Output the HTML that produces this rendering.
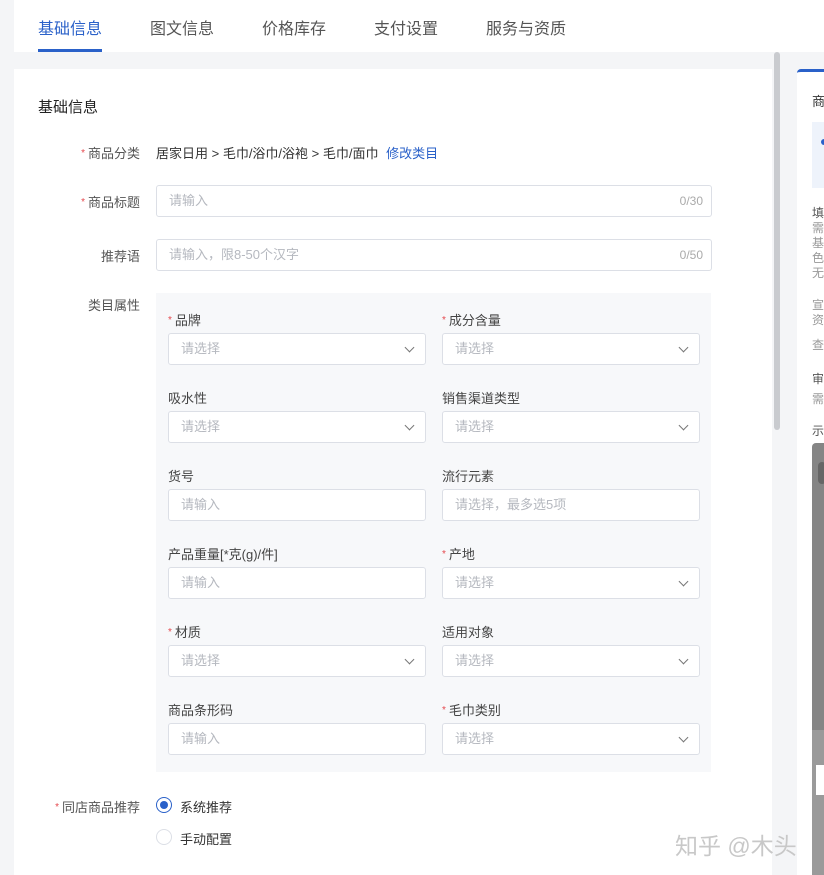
<!DOCTYPE html>
<html><head><meta charset="utf-8"><style>
*{margin:0;padding:0;box-sizing:border-box}
body{width:824px;height:875px;overflow:hidden;background:#f4f5f7;font-family:"Liberation Sans","Noto Sans CJK SC",sans-serif;font-size:14px;color:#333;position:relative}
.abs{position:absolute}
.tabs{left:14px;top:0;width:810px;height:52px;background:#fff}
.tab{position:absolute;top:15px;font-size:16px;color:#555}
.main{left:14px;top:69px;width:758px;height:806px;background:#fff}
.lbl{position:absolute;font-size:13px;color:#555;text-align:right;width:100px}
.star{color:#e5484d;font-size:10px;margin-right:3px;vertical-align:2px}
.inp{position:absolute;height:32px;border:1px solid #dcdfe6;border-radius:3px;background:#fff;font-size:13px;color:#b5b8bf;padding:0 12px;line-height:30px}
.cnt{position:absolute;right:8px;top:0;color:#aaa;font-size:12px}
.box{left:156px;top:293px;width:555px;height:479px;background:#f7f8fa}
.fl{position:absolute;font-size:13px;color:#444}
.chev{position:absolute;right:12px;top:10px;width:7px;height:7px;border-right:1px solid #777;border-bottom:1px solid #777;transform:rotate(45deg)}
</style></head><body>
<div class="abs tabs">
<div class="tab" style="left:24px;color:#2a61c9">基础信息</div>
<div class="abs" style="left:24px;top:49px;width:64px;height:3px;background:#2a61c9"></div>
<div class="tab" style="left:136px">图文信息</div>
<div class="tab" style="left:248px">价格库存</div>
<div class="tab" style="left:360px">支付设置</div>
<div class="tab" style="left:472px">服务与资质</div>
</div>
<div class="abs main"></div>
<div class="abs" style="left:774px;top:52px;width:6px;height:378px;background:#c9cbcf;border-radius:3px"></div>
<div class="abs" style="left:797px;top:69px;width:27px;height:806px;background:#fff;border-top:3px solid #2a61c9;border-top-left-radius:4px"></div>
<div class="abs" style="left:812px;top:91px;font-size:13px">商</div>
<div class="abs" style="left:812px;top:122px;width:12px;height:66px;background:#eef3fb"></div>
<div class="abs" style="left:821px;top:139px;width:6px;height:6px;border-radius:3px;background:#2a61c9"></div>
<div class="abs" style="left:812px;top:206px;font-size:12px;line-height:15px;color:#555">填<br><span style="color:#999">需<br>基<br>色<br>无</span></div>
<div class="abs" style="left:812px;top:298px;font-size:12px;line-height:15px;color:#999">宣<br>资</div>
<div class="abs" style="left:812px;top:336px;font-size:12px;color:#999">查</div>
<div class="abs" style="left:812px;top:369px;font-size:12px;line-height:20px;color:#555">审<br><span style="color:#999">需</span></div>
<div class="abs" style="left:812px;top:422px;font-size:12px;color:#555">示</div>
<div class="abs" style="left:812px;top:443px;width:12px;height:432px;background:#858585;border-top-left-radius:4px"></div>
<div class="abs" style="left:812px;top:730px;width:12px;height:145px;background:#9a9a9a"></div>
<div class="abs" style="left:816px;top:765px;width:8px;height:30px;background:#fff"></div>
<div class="abs" style="left:818px;top:462px;width:8px;height:22px;border-radius:10px;background:#666"></div>

<div class="abs" style="left:38px;top:96px;font-size:15px;color:#222">基础信息</div>
<div class="lbl" style="left:40px;top:143px"><span class="star">*</span>商品分类</div>
<div class="abs" style="left:156px;top:143px;font-size:13px;color:#333">居家日用 &gt; 毛巾/浴巾/浴袍 &gt; 毛巾/面巾 <span style="color:#2a61c9;margin-left:4px">修改类目</span></div>
<div class="lbl" style="left:40px;top:192px"><span class="star">*</span>商品标题</div>
<div class="inp" style="left:156px;top:185px;width:556px">请输入<span class="cnt">0/30</span></div>
<div class="lbl" style="left:40px;top:246px">推荐语</div>
<div class="inp" style="left:156px;top:239px;width:556px">请输入，限8-50个汉字<span class="cnt">0/50</span></div>
<div class="lbl" style="left:40px;top:295px">类目属性</div>
<div class="abs box"></div>

<div class="fl" style="left:168px;top:310px"><span class="star">*</span>品牌</div>
<div class="inp" style="left:168px;top:333px;width:258px">请选择<i class="chev"></i></div>
<div class="fl" style="left:442px;top:310px"><span class="star">*</span>成分含量</div>
<div class="inp" style="left:442px;top:333px;width:258px">请选择<i class="chev"></i></div>

<div class="fl" style="left:168px;top:388px">吸水性</div>
<div class="inp" style="left:168px;top:411px;width:258px">请选择<i class="chev"></i></div>
<div class="fl" style="left:442px;top:388px">销售渠道类型</div>
<div class="inp" style="left:442px;top:411px;width:258px">请选择<i class="chev"></i></div>

<div class="fl" style="left:168px;top:466px">货号</div>
<div class="inp" style="left:168px;top:489px;width:258px">请输入</div>
<div class="fl" style="left:442px;top:466px">流行元素</div>
<div class="inp" style="left:442px;top:489px;width:258px">请选择，最多选5项</div>

<div class="fl" style="left:168px;top:544px">产品重量[*克(g)/件]</div>
<div class="inp" style="left:168px;top:567px;width:258px">请输入</div>
<div class="fl" style="left:442px;top:544px"><span class="star">*</span>产地</div>
<div class="inp" style="left:442px;top:567px;width:258px">请选择<i class="chev"></i></div>

<div class="fl" style="left:168px;top:622px"><span class="star">*</span>材质</div>
<div class="inp" style="left:168px;top:645px;width:258px">请选择<i class="chev"></i></div>
<div class="fl" style="left:442px;top:622px">适用对象</div>
<div class="inp" style="left:442px;top:645px;width:258px">请选择<i class="chev"></i></div>

<div class="fl" style="left:168px;top:700px">商品条形码</div>
<div class="inp" style="left:168px;top:723px;width:258px">请输入</div>
<div class="fl" style="left:442px;top:700px"><span class="star">*</span>毛巾类别</div>
<div class="inp" style="left:442px;top:723px;width:258px">请选择<i class="chev"></i></div>

<div class="lbl" style="left:40px;top:797px"><span class="star">*</span>同店商品推荐</div>
<div class="abs" style="left:156px;top:797px;width:16px;height:16px;border:1px solid #2a61c9;border-radius:50%"></div>
<div class="abs" style="left:160px;top:801px;width:8px;height:8px;background:#2a61c9;border-radius:50%"></div>
<div class="abs" style="left:180px;top:797px;font-size:13px">系统推荐</div>
<div class="abs" style="left:156px;top:829px;width:16px;height:16px;border:1px solid #dcdfe6;border-radius:50%"></div>
<div class="abs" style="left:180px;top:829px;font-size:13px">手动配置</div>
<div class="abs" style="left:675px;top:827px;font-size:23px;color:#c8c8c8">知乎 @木头</div>
</body></html>
